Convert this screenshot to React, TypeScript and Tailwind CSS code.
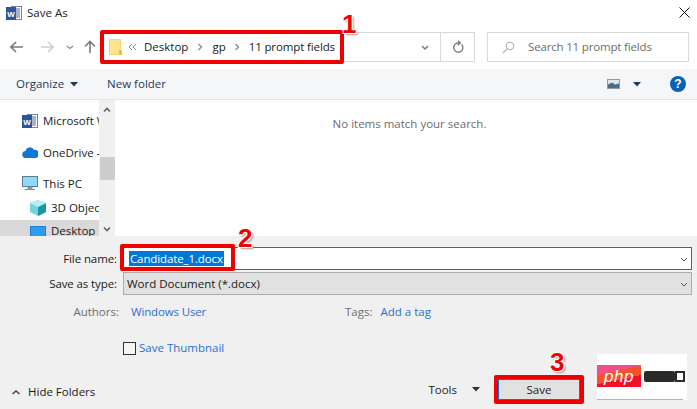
import React from "react";

const WordIcon = ({ s = 16 }: { s?: number }) => (
  <svg width={s} height={s} viewBox="0 0 16 16" className="shrink-0">
    <rect x="5.500" y="1.500" width="10" height="13" fill="#fff" stroke="#6f83a3" strokeWidth="1" />
    <path d="M10 4h4M10 6h4M10 8h4M10 10h4M10 12h4" stroke="#4a6ba3" strokeWidth="1" />
    <rect x="0" y="2" width="10" height="13" fill="#2b5797" />
    <text x="5" y="11.500" textAnchor="middle" fontSize="8" fontWeight="700" fill="#fff" fontFamily="Liberation Sans, sans-serif">W</text>
  </svg>
);

const Chevron = ({ cls = "", d = "M2 4l3 3 3-3", c = "#555", w = 10, sw = 1.2 }: { cls?: string; d?: string; c?: string; w?: number; sw?: number }) => (
  <svg width={w} height={w} viewBox="0 0 10 10" className={cls}>
    <path d={d} fill="none" stroke={c} strokeWidth={sw} />
  </svg>
);

const Crumb = () => (
  <svg width="8" height="8" viewBox="0 0 8 8" className="shrink-0">
    <path d="M2.500 1l3 3-3 3" fill="none" stroke="#8a8a8a" strokeWidth="1.300" />
  </svg>
);

const Caret = ({ c = "#333" }: { c?: string }) => (
  <svg width="8" height="5" viewBox="0 0 8 5" className="shrink-0">
    <path d="M0 0h8L4 4.500z" fill={c} />
  </svg>
);

const Badge = ({ n, cls }: { n: string; cls: string }) => (
  <span
    className={`absolute font-['Liberation_Sans',sans-serif] text-[26px] leading-none font-bold text-[#f00000] ${cls}`}
    style={{ textShadow: "-1px -1px 0 #fff, 1px -1px 0 #fff, -1px 1px 0 #fff, 1px 1px 0 #fff, 2px 2px 2px #999" }}
  >
    {n}
  </span>
);

const NavItem = ({ icon, label, indent = false, cls = "" }: { icon: React.ReactNode; label: string; indent?: boolean; cls?: string }) => (
  <div className={`flex items-center overflow-hidden whitespace-nowrap gap-[5px] ${indent ? "pl-[30px]" : "pl-[22px]"} ${cls}`}>
    <span className="w-[16px] h-[16px] shrink-0 flex items-center justify-center">{icon}</span>
    <span className="text-[#1a1a1a]">{label}</span>
  </div>
);

export default function App() {
  return (
    <div className="relative w-[697px] h-[409px] overflow-hidden bg-white flex flex-col font-['Open_Sans',sans-serif] text-[11.5px] text-[#1a1a1a] leading-none">
      {/* title */}
      <div className="h-[25px] flex items-center pl-[6px] pr-[7px] gap-[5px] shrink-0">
        <WordIcon />
        <span className="text-[#222]">Save As</span>
        <svg width="11" height="11" viewBox="0 0 11 11" className="ml-auto">
          <path d="M.5.5l10 10M10.500.5l-10 10" stroke="#111" strokeWidth="1" />
        </svg>
      </div>

      {/* nav row */}
      <div className="h-[44px] shrink-0 flex items-center pl-[10px] pr-[8px]">
        <svg width="14" height="12" viewBox="0 0 14 12" className="shrink-0">
          <path d="M6 1L1 6l5 5M1 6h12" fill="none" stroke="#7a7a7a" strokeWidth="1.600" />
        </svg>
        <svg width="14" height="12" viewBox="0 0 14 12" className="shrink-0 ml-[16px]">
          <path d="M8 1l5 5-5 5M13 6H1" fill="none" stroke="#cfcfcf" strokeWidth="1.600" />
        </svg>
        <Chevron cls="ml-[11px] shrink-0" c="#8a8a8a" d="M2 4l3 2.500 3-2.500" />
        <svg width="12" height="14" viewBox="0 0 12 14" className="shrink-0 ml-[9px]">
          <path d="M1 6.500l5-5 5 5M6 1.500V13" fill="none" stroke="#7a7a7a" strokeWidth="1.600" />
        </svg>
        <div className="ml-[7px] h-[30px] w-[372px] border border-[#d9d9d9] flex items-center shrink-0">
          <svg width="13" height="16" viewBox="0 0 13 16" className="ml-[5px] shrink-0">
            <path d="M.5.5h11v15H.5z" fill="#fde58f" stroke="#f1d67a" />
            <path d="M10 11h3v5h-3z" fill="#e8c04e" />
          </svg>
          <svg width="9" height="8" viewBox="0 0 9 8" className="ml-[6px] shrink-0">
            <path d="M4 1L1 4l3 3M8 1L5 4l3 3" fill="none" stroke="#8a8a8a" strokeWidth="1" />
          </svg>
          <span className="ml-[7px]">Desktop</span>
          <span className="ml-[8px]"><Crumb /></span>
          <span className="ml-[8px]">gp</span>
          <span className="ml-[7px]"><Crumb /></span>
          <span className="ml-[8px] tracking-[-0.12px]">11 prompt fields</span>
          <Chevron cls="ml-auto mr-[10px] shrink-0" c="#7a7a7a" sw={1.5} />
          <div className="w-[34px] h-full border-l border-[#d9d9d9] flex items-center justify-center shrink-0">
            <svg width="12" height="14" viewBox="0 0 12 14">
              <path d="M9.700 4.500A4.600 4.600 0 1 1 6 3H8M6 .8L8.300 3 6 5.200" fill="none" stroke="#7a7a7a" strokeWidth="1.300" />
            </svg>
          </div>
        </div>
        <div className="ml-auto h-[30px] w-[202px] border border-[#d9d9d9] flex items-center shrink-0">
          <svg width="13" height="13" viewBox="0 0 13 13" className="ml-[14px] shrink-0">
            <circle cx="8" cy="5" r="3.800" fill="none" stroke="#b0a898" strokeWidth="1" />
            <path d="M5 8l-4 4" stroke="#c9b68a" strokeWidth="1.200" />
          </svg>
          <span className="ml-[13px] text-[#6d6d6d] tracking-[-0.17px]">Search 11 prompt fields</span>
        </div>
      </div>

      {/* toolbar */}
      <div className="h-[31px] shrink-0 bg-[#f5f6f7] border-b border-[#e5e5e5] flex items-center pl-[16px] pr-[11px] text-[#1e3a5f]">
        <span>Organize</span>
        <span className="ml-[6px]"><Caret c="#1e3a5f" /></span>
        <span className="ml-[29px]">New folder</span>
        <svg width="13" height="10" viewBox="0 0 13 10" className="ml-auto shrink-0">
          <rect x=".5" y=".5" width="12" height="9" fill="#dfe7ee" stroke="#8f9aa5" />
          <path d="M1 5.500l4-2 3 2 4-1V9H1z" fill="#4d6c85" />
        </svg>
        <span className="ml-[13px]"><Caret c="#1e3a5f" /></span>
        <span className="ml-[29px] w-[16px] h-[16px] rounded-full bg-[#0a62b5] text-white font-bold text-[12px] flex items-center justify-center font-['Liberation_Sans',sans-serif]">?</span>
      </div>

      {/* body */}
      <div className="h-[136px] shrink-0 flex">
        <div className="w-[99px] shrink-0 flex flex-col pt-[9px] overflow-hidden">
          <NavItem icon={<WordIcon />} label="Microsoft Word" cls="h-[23px]" />
          <NavItem
            cls="h-[23px] mt-[9px]"
            icon={
              <svg width="16" height="11" viewBox="0 0 16 11">
                <path d="M4 11a3.500 3.500 0 0 1-.5-7 4.500 4.500 0 0 1 8.500-1 4 4 0 0 1 2 8z" fill="#0f78d4" />
              </svg>
            }
            label="OneDrive - Personal"
          />
          <NavItem
            cls="h-[23px] mt-[8px]"
            icon={
              <svg width="16" height="15" viewBox="0 0 16 15">
                <rect x=".5" y=".5" width="15" height="10" fill="#8fd8f7" stroke="#5a7d95" />
                <path d="M6 11h4v2H6zM3 13.500h10" stroke="#7f8c96" fill="#9aa7b0" />
              </svg>
            }
            label="This PC"
          />
          <NavItem
            indent
            cls="h-[21px] mt-[2px]"
            icon={
              <svg width="16" height="16" viewBox="0 0 16 16">
                <path d="M8 0l8 3v9l-8 4-8-4V3z" fill="#6fd5e0" />
                <path d="M8 7l8-4v9l-8 4z" fill="#1d93a8" />
                <path d="M8 7L0 3l8-3 8 3z" fill="#b7eef2" />
              </svg>
            }
            label="3D Objects"
          />
          <div className="mt-[2px] h-[16px] shrink-0 flex items-start overflow-hidden whitespace-nowrap bg-[#d9d9d9] pl-[30px] pt-[6px] gap-[5px]">
            <span className="block w-[16px] h-[14px] shrink-0 bg-[#2b9cf0] border border-[#1f7fd0]" />
            <span className="-mt-[1px]">Desktop</span>
          </div>
        </div>
        <div className="w-[16px] shrink-0 bg-[#f0f0f0] flex flex-col items-center">
          <Chevron cls="mt-[5px] shrink-0" d="M2 6.500l3-3 3 3" c="#606060" sw={1.6} />
          <div className="mt-[42px] w-[15px] h-[23px] bg-[#cdcdcd] shrink-0" />
          <Chevron cls="mt-auto mb-[2px] shrink-0" d="M2 3.500l3 3 3-3" c="#606060" sw={1.6} />
        </div>
        <div className="flex-1 flex justify-center pt-[18px] pl-[7px] text-[#6d6d6d]">No items match your search.</div>
      </div>

      {/* bottom panel */}
      <div className="flex-1 bg-[#f0f0f0] flex flex-col pl-[7px] pr-[5px]">
        <div className="mt-[11px] flex items-center">
          <span className="w-[110px] text-right shrink-0 tracking-[-0.1px]">File name:</span>
          <div className="ml-[6px] flex-1 h-[23px] bg-white border border-[#0078d7] flex items-center pl-[5px]">
            <span className="bg-[#0078d7] text-white h-[15px] flex items-center px-[1px] tracking-[-0.12px]">Candidate_1.docx</span>
            <Chevron cls="ml-auto mr-[2px]" c="#555" sw={1} />
          </div>
        </div>
        <div className="mt-[2px] flex items-center">
          <span className="w-[110px] text-right shrink-0 tracking-[-0.1px]">Save as type:</span>
          <div className="ml-[6px] flex-1 h-[23px] bg-[#e1e1e1] border border-[#adadad] flex items-center pl-[3px]">
            <span>Word Document (*.docx)</span>
            <Chevron cls="ml-auto mr-[2px]" c="#555" sw={1} />
          </div>
        </div>
        <div className="mt-[10px] flex items-center h-[14px]">
          <span className="w-[112px] text-right shrink-0 text-[#6d6d6d]">Authors:</span>
          <span className="ml-[12px] text-[#2a6fd0] w-[180px] shrink-0 tracking-[-0.15px]">Windows User</span>
          <span className="ml-[34px] text-[#6d6d6d]">Tags:</span>
          <span className="ml-[8px] text-[#2a6fd0]">Add a tag</span>
        </div>
        <div className="mt-[22px] ml-[116px] flex items-center h-[14px]">
          <span className="w-[13px] h-[13px] border border-[#333] bg-[#f5f5f5] shrink-0" />
          <span className="ml-[3px] text-[#2a6fd0]">Save Thumbnail</span>
        </div>
        <div className="mt-[20px] flex items-start h-[24px]">
          <div className="flex items-center mt-[11px] ml-[4px]">
            <Chevron cls="shrink-0" d="M1.500 7l3.500-3 3.500 3" c="#444" sw={1.5} />
            <span className="ml-[7px]">Hide Folders</span>
          </div>
          <div className="ml-auto flex items-start mt-[4px]">
            <div className="flex items-center h-[21px]">
              <span>Tools</span>
              <span className="ml-[15px]"><Caret /></span>
            </div>
            <div className="ml-[18px] mr-[112px] w-[82px] h-[21px] bg-[#e1e1e1] border border-[#0078d7] flex items-center justify-center">Save</div>
          </div>
        </div>
      </div>

      {/* annotations */}
      <div className="absolute left-[100px] top-[30px] w-[244px] h-[34px] border-[4px] border-[#f00000] rounded-[2px]" />
      <div className="absolute left-[120px] top-[244px] w-[115px] h-[27px] border-[4px] border-[#f00000] rounded-[2px]" />
      <div className="absolute left-[494px] top-[375px] w-[90px] h-[29px] border-[4px] border-[#f00000] rounded-[2px]" />
      <Badge n="1" cls="left-[342px] top-[11px]" />
      <Badge n="2" cls="left-[238px] top-[225px]" />
      <Badge n="3" cls="left-[550px] top-[349px]" />

      {/* watermark */}
      <div className="absolute left-[597px] top-[354px] w-[90px] h-[46px] bg-white">
        <div className="absolute left-0 top-[45px] w-[86px] h-[1px] bg-[#b5b5b5]" />
        <div className="absolute left-0 top-[11px] w-[44px] h-[22px] overflow-hidden flex items-center justify-center bg-[linear-gradient(168deg,#f0508a_0%,#f0508a_32%,#f8502a_32%,#f8502a_62%,#f5102a_62%,#f5102a_100%)]">
          <span className="text-white italic text-[17px] tracking-[0.5px] font-['Liberation_Sans',sans-serif]">php</span>
        </div>
        <div className="absolute left-[47px] top-[17px] w-[31px] h-[11px] bg-[#2a2a2a] rounded-[2px]" />
        <div className="absolute left-[78px] top-[17px] w-[10px] h-[11px] border-[2px] border-[#2a2a2a]" />
      </div>
    </div>
  );
}
